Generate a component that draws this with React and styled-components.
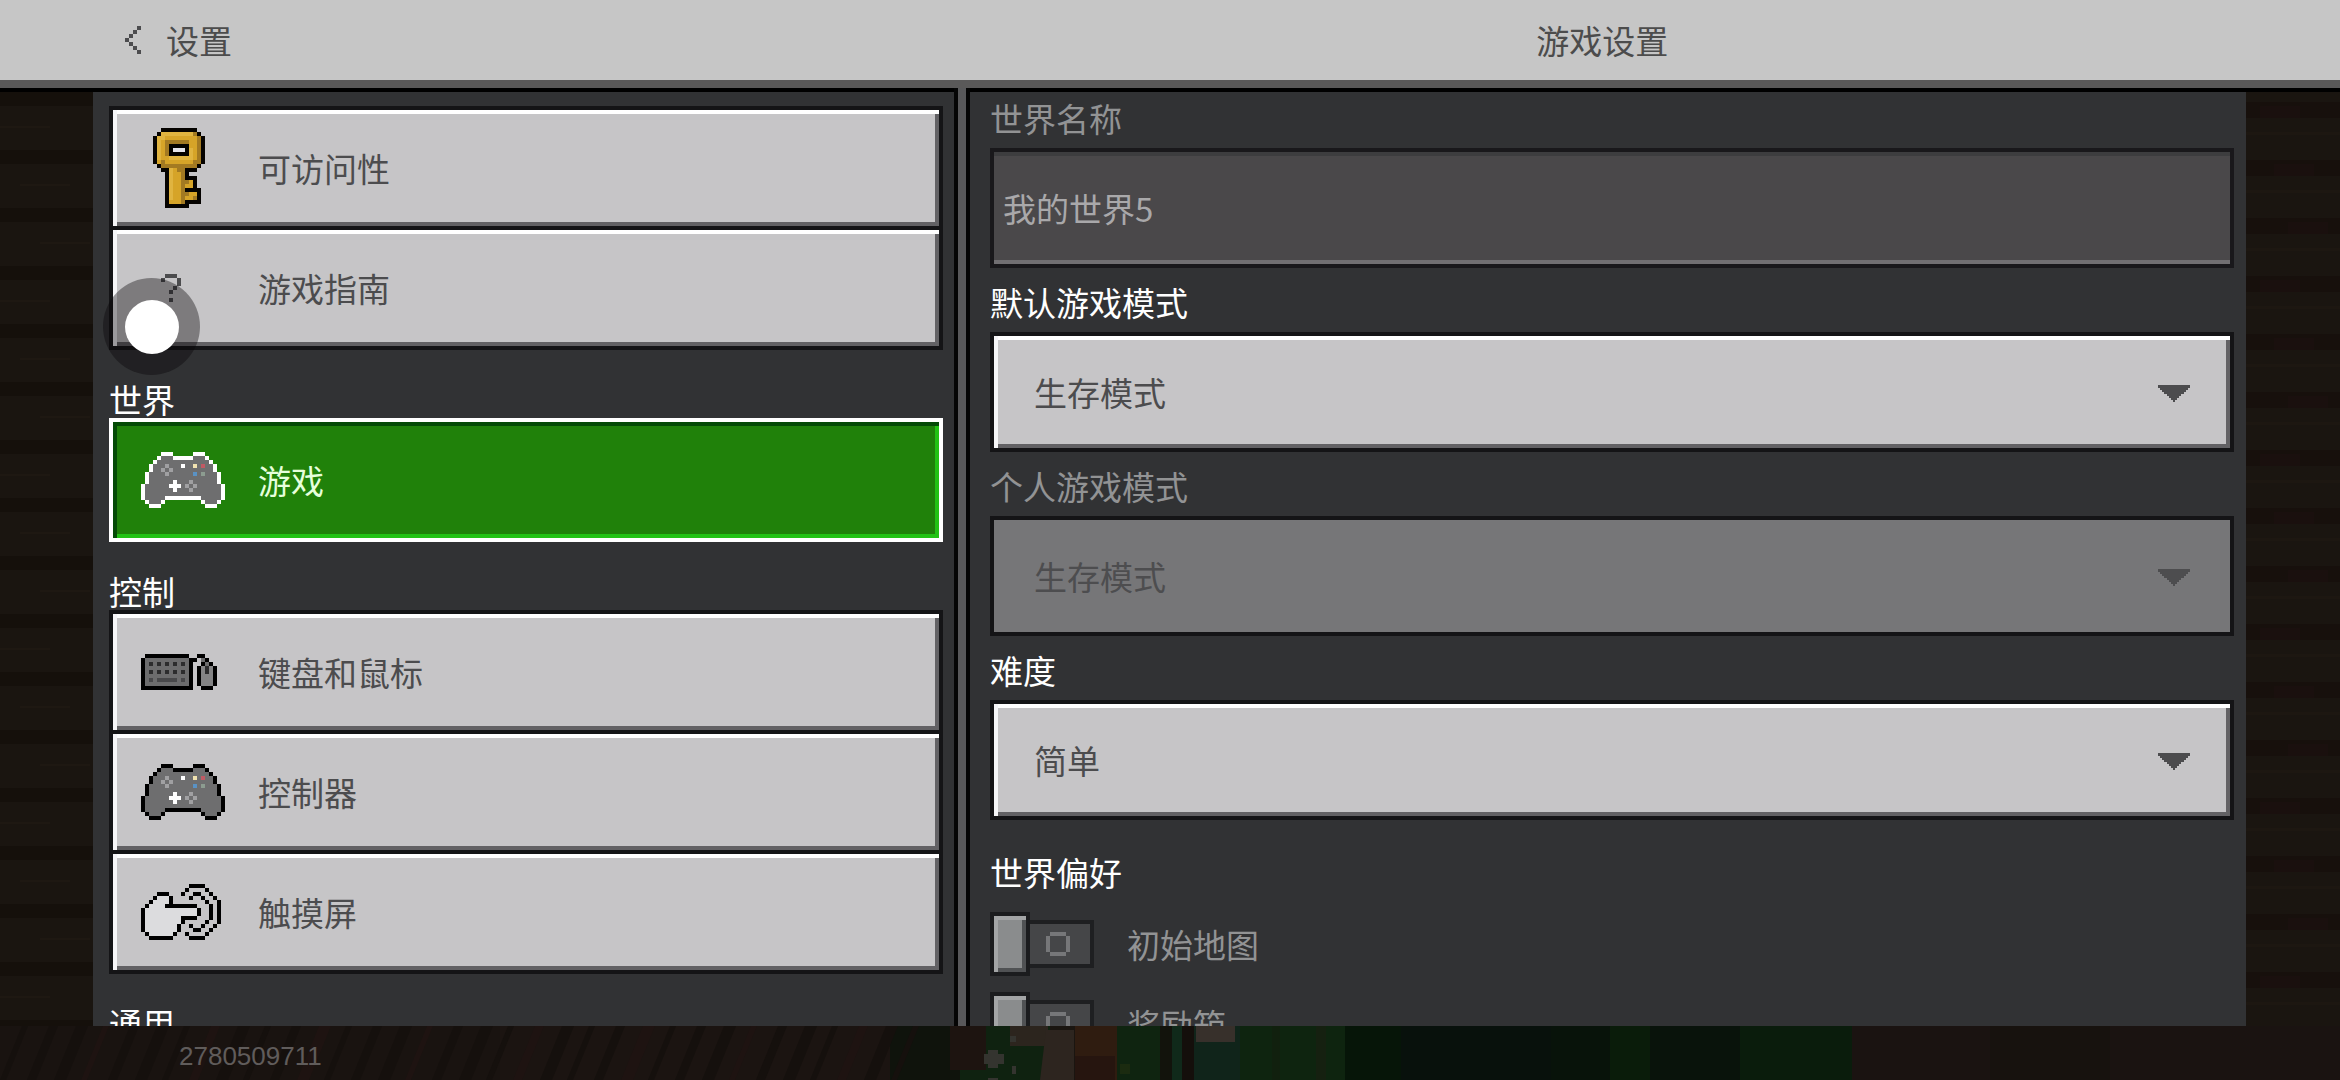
import React from "react";
import styled, { createGlobalStyle } from "styled-components";

const GlobalStyle = createGlobalStyle`
  * {
    box-sizing: border-box;
  }
  body {
    margin: 0;
    background-color: #1a1511;
  }
  body, button, input, select {
    font-family: "Noto Sans CJK SC", sans-serif;
    font-size: 33px;
    font-weight: 400;
    line-height: 40px;
  }
`;

const Page = styled.div`
  position: relative;
  isolation: isolate;
  display: flex;
  flex-direction: column;
  height: 100vh;
  overflow: hidden;
`;

const Scene = styled.svg`
  position: absolute;
  inset: 0;
  z-index: -1;
  width: 100%;
  height: 100%;
`;

const Header = styled.header`
  display: grid;
  grid-template-columns: 877fr 1276fr;
  align-items: center;
  flex: none;
  height: 88px;
  margin-bottom: 4px;
  padding: 0 94px;
  border-bottom: 8px solid #5a5959;
  background-color: #c6c6c6;
  color: #4c4c4c;
  box-shadow: 0 4px 0 #000;
`;

const Back = styled.button`
  display: flex;
  align-items: center;
  gap: 25px;
  justify-self: start;
  margin-left: 31px;
  padding: 0;
  border: none;
  background: none;
  color: inherit;
`;

const Title = styled.h1`
  margin: 0;
  padding-right: 12px;
  font-size: 33px;
  font-weight: 400;
  line-height: 40px;
  text-align: center;
`;

const Main = styled.main`
  display: grid;
  grid-template-columns: 861fr 16px 1276fr;
  grid-template-rows: 100%;
  flex: 1;
  min-height: 0;
  margin: 0 94px 0 93px;
`;

const Divider = styled.div`
  margin-top: -4px;
  border: solid #050505;
  border-width: 0 4px;
  background-color: #58585a;
`;

const Sidebar = styled.nav`
  overflow: hidden;
  padding: 14px 11px 0 16px;
  background-color: #313234;
`;

const Content = styled.section`
  overflow: hidden;
  padding: 0 12px 0 20px;
  background-color: #313234;
`;

const GroupTitle = styled.h2`
  display: flex;
  align-items: flex-end;
  height: 68px;
  margin: 0;
  font-size: 33px;
  font-weight: 400;
  line-height: 38px;
  color: #fff;
`;

const NavButton = styled.button`
  display: flex;
  align-items: center;
  gap: 33px;
  width: 100%;
  height: 124px;
  padding: 0 28px;
  border: 4px solid ${(props) => (props.$active ? "#fff" : "#141416")};
  background-color: ${(props) => (props.$active ? "#20810a" : "#c6c5c7")};
  color: ${(props) => (props.$active ? "#e6ffdc" : "#4c4c4e")};
  box-shadow: ${(props) =>
    props.$active
      ? "inset 4px 0 #044a06, inset 0 4px #044a06, inset -4px -4px #22c214"
      : "inset 4px 0 #f6f6f8, inset 0 4px #fff, inset -4px -4px #626164"};

  & + & {
    margin-top: -4px;
  }
`;

const Icon = styled.svg`
  display: block;
  flex: none;
  shape-rendering: crispEdges;
`;

const Field = styled.div`
  display: flex;
  flex-direction: column;
`;

const FieldLabel = styled.label`
  display: flex;
  align-items: flex-end;
  height: ${(props) => (props.$first ? "56px" : "64px")};
  padding-bottom: 10px;
  color: ${(props) => (props.$dim ? "#929394" : "#fff")};
`;

const TextInput = styled.input`
  width: 100%;
  height: 120px;
  padding: 0 9px;
  border: 4px solid #19181b;
  border-radius: 0;
  background-color: #4a484a;
  color: #a9a8aa;
  box-shadow: inset 0 4px #3d3d3f, inset 0 -4px #716f72;
`;

const SelectBox = styled.div`
  display: grid;
  align-items: center;
  color: ${(props) => (props.$dim ? "#4d4d4f" : "#4c4c4e")};

  > * {
    grid-area: 1 / 1;
  }
  > svg {
    justify-self: end;
    margin-right: 44px;
    pointer-events: none;
  }
`;

const Select = styled.select`
  appearance: none;
  width: 100%;
  height: 120px;
  padding: 0 40px;
  border: 4px solid #141416;
  border-radius: 0;
  background-color: #c6c5c7;
  color: inherit;
  opacity: 1;
  box-shadow: inset 4px 0 #f6f6f8, inset 0 4px #fff, inset -4px -4px #626164;

  &:disabled {
    background-color: #767678;
    box-shadow: none;
    opacity: 1;
  }
`;

const SectionTitle = styled.h2`
  margin: 0;
  padding: 32px 0 20px;
  font-size: 33px;
  font-weight: 400;
  line-height: 40px;
  color: #fff;
`;

const ToggleRow = styled.label`
  display: flex;
  align-items: center;
  gap: 33px;
  height: 64px;
  margin-bottom: 16px;
  color: #929394;
`;

const Toggle = styled.span`
  position: relative;
  display: flex;
  align-items: center;
`;

const ToggleInput = styled.input`
  position: absolute;
  inset: 0;
  width: 100%;
  height: 100%;
  margin: 0;
  opacity: 0;
`;

const Knob = styled.span`
  width: 40px;
  height: 64px;
  border: 4px solid #1b1c1e;
  background-color: #8a8c8d;
  box-shadow: inset 4px 0 #a3a5a6, inset 0 4px #a3a5a6, inset -4px -4px #505254;
`;

const Track = styled.span`
  display: flex;
  align-items: center;
  justify-content: center;
  width: 64px;
  height: 48px;
  padding-right: 4px;
  border: solid #1e1f21;
  border-width: 4px 4px 4px 0;
  background-color: #454648;
`;

const Footer = styled.footer`
  flex: none;
  height: 54px;
  padding: 2px 0 0 179px;
  font-family: "Liberation Sans", sans-serif;
  font-size: 26px;
  font-weight: 400;
  line-height: 56px;
  color: #605c5b;
`;

const TouchRing = styled.div`
  position: absolute;
  top: 278px;
  left: 103px;
  display: flex;
  align-items: center;
  justify-content: center;
  width: 97px;
  height: 97px;
  border-radius: 50%;
  background-color: rgba(9, 6, 9, 0.385);
  pointer-events: none;
`;

const TouchDot = styled.div`
  width: 54px;
  height: 54px;
  border-radius: 50%;
  background-color: #fff;
`;

// one character per texel, "." is empty
const KEY = [
  "..KKKKKKKKK..",
  ".KYYYYYYYYdK.",
  "KYYyyyyyyyydK",
  "KYyddddddyydK",
  "KYydKKKKKyydK",
  "KYydKwwwKYydK",
  "KYydKKKKKYydK",
  "KYyyYYYYYYydK",
  "KydyyyyyyyddK",
  ".KdddddddddK.",
  "..KKYyddKKK..",
  "...KYyydK....",
  "...KYyydKKK..",
  "...KYyyddyK..",
  "...KYyydyyK..",
  "...KYyydKKKK.",
  "...KYyyddyyK.",
  "...KYyydyydK.",
  "...KyyydKKKK.",
  "...KKKKKK....",
];

const QUESTION = [
  ".qqq.",
  "q...q",
  "....q",
  "...q.",
  "..q..",
  ".....",
  "..q..",
];

const GAMEPAD = [
  ".....KKK.....KKK.....",
  "....KgggKKKKKgggK....",
  "...KgggggggggggggK...",
  "..KgggLgggWggYgRggK..",
  "..KggLgLggggggggggK..",
  ".KggggLggggggBgGgggK.",
  ".KgggggggggggggggggK.",
  ".KggggggWgggLggggggK.",
  "KggggggWWWgLgLggggggK",
  "KgggggggWgggLgggggggK",
  "KgggggggggggggggggggK",
  "KgggggKKKKKKKKKgggggK",
  ".KgggK.........KgggK.",
  "..KKK...........KKK..",
];

const KEYBOARD = [
  ".KKKKKKKKKKK..KK...",
  "KgggggggggggKK.gK..",
  "KgDgDgDgDgDgK..KgK.",
  "KgggggggggggK.KmDmK",
  "KgDgDgDgDgDgK.KmDmK",
  "KgggggggggggK.KmmmK",
  "KgdgdddddgdgK.KmmmK",
  "KgggggggggggK.KmmmK",
  "KKKKKKKKKKKKK..KKK.",
];

const HAND = [
  "............KKKK....",
  "...........K....K...",
  "....KKK...K..KK..K..",
  "...KfffK....K..K..K.",
  "..KffffK........K..K",
  ".KffffKKKKKKKK...K.K",
  "KfffffffffffffK..K.K",
  "KfffffffffffffK..K.K",
  "KfffffffffKKKK...K.K",
  "KfffffffffK.....K..K",
  "KffffffffK..K..K..K.",
  "KffffffffK...KK..K..",
  ".KffffffK..K....K...",
  "..KKKKKK....KKKK....",
];

const CHEVRON = ["...q", "..q.", ".q..", "q...", ".q..", "..q.", "...q"];

const RING = [".oooo.", "o....o", "o....o", "o....o", "o....o", ".oooo."];

const KEY_COLORS = { K: "#050300", Y: "#e0b440", y: "#d6a428", d: "#a37a22", w: "#e4e4ea" };
const PAD_COLORS = {
  K: "#000",
  g: "#6e6e6f",
  L: "#a0a0a2",
  W: "#fff",
  Y: "#f0e2b0",
  R: "#c05a64",
  B: "#5a92c4",
  G: "#8c9c90",
};
const KEYBOARD_COLORS = { K: "#000", g: "#6c6c6d", D: "#2c2c2d", d: "#48484a", m: "#848485" };
const HAND_COLORS = { K: "#000", f: "#dcdcde" };
const INK = { q: "#4c4c4e", o: "#767779" };

function Pixels({ map, colors, columns, left = 0 }) {
  const cols = columns || map[0].length;
  return (
    <Icon
      width={cols * 4}
      height={map.length * 4}
      viewBox={`${-left} 0 ${cols} ${map.length}`}
      aria-hidden="true"
    >
      {map.map((row, y) =>
        [...row].map((c, x) =>
          c === "." ? null : (
            <rect key={`${x}-${y}`} x={x} y={y} width="1" height="1" fill={colors[c]} />
          )
        )
      )}
    </Icon>
  );
}

function Arrow() {
  return (
    <Icon width="32" height="20" viewBox="0 -3 32 20" aria-hidden="true">
      <path
        fill="currentColor"
        d="M0 0h32v3h-2v2h-2v2h-2v2h-3v2h-2v2h-2v2h-2v2h-2v-2h-2v-2h-2v-2h-2v-2h-3v-2h-2v-2h-2v-2h-2z"
      />
    </Icon>
  );
}

function Dropdown({ id, label, value, disabled }) {
  return (
    <Field>
      <FieldLabel htmlFor={id} $dim={disabled}>
        {label}
      </FieldLabel>
      <SelectBox $dim={disabled}>
        <Select id={id} defaultValue={value} disabled={disabled}>
          <option>{value}</option>
        </Select>
        <Arrow />
      </SelectBox>
    </Field>
  );
}

function Switch({ label }) {
  return (
    <ToggleRow>
      <Toggle>
        <ToggleInput type="checkbox" disabled />
        <Knob />
        <Track>
          <Pixels map={RING} colors={INK} />
        </Track>
      </Toggle>
      {label}
    </ToggleRow>
  );
}

const groups = [
  {
    items: [
      { text: "可访问性", icon: KEY, colors: KEY_COLORS, left: 3 },
      { text: "游戏指南", icon: QUESTION, colors: INK, left: 5 },
    ],
  },
  {
    title: "世界",
    items: [
      { text: "游戏", icon: GAMEPAD, colors: { ...PAD_COLORS, K: "#fff" }, active: true },
    ],
  },
  {
    title: "控制",
    items: [
      { text: "键盘和鼠标", icon: KEYBOARD, colors: KEYBOARD_COLORS },
      { text: "控制器", icon: GAMEPAD, colors: PAD_COLORS },
      { text: "触摸屏", icon: HAND, colors: HAND_COLORS },
    ],
  },
  { title: "通用", items: [] },
];

// x, y, width, height, color
const blocks = [
  [0, 1026, 900, 54, "#191310"],
  [500, 1026, 400, 54, "#1b1411"],
  [890, 1026, 70, 54, "#0f130c"],
  [960, 1026, 90, 54, "#0f2210"],
  [950, 1026, 36, 44, "#1d1410"],
  [1010, 1026, 38, 20, "#2c251e"],
  [1075, 1026, 42, 54, "#2f1c10"],
  [1075, 1056, 40, 24, "#26150f"],
  [1117, 1026, 44, 54, "#0f2410"],
  [1120, 1064, 10, 10, "#1b2b10"],
  [1160, 1026, 12, 54, "#12130c"],
  [1172, 1026, 10, 54, "#10291a"],
  [1182, 1026, 12, 54, "#140f0b"],
  [1194, 1026, 46, 54, "#10241a"],
  [1240, 1026, 105, 54, "#0e240f"],
  [1272, 1026, 8, 54, "#11200e"],
  [1316, 1026, 10, 54, "#152010"],
  [1196, 1026, 39, 16, "#37302b"],
  [1345, 1026, 56, 54, "#061508"],
  [1401, 1026, 150, 54, "#08110c"],
  [1551, 1026, 59, 54, "#08130a"],
  [1610, 1026, 40, 54, "#0a1c0a"],
  [1650, 1026, 90, 54, "#09130b"],
  [1740, 1026, 112, 54, "#0a1c0c"],
  [1852, 1026, 488, 54, "#1a1311"],
  [1990, 1026, 120, 54, "#17120e"],
];

function Background() {
  const slants = Array.from({ length: 34 }, (_, i) => i * 27);
  const planks = Array.from({ length: 17 }, (_, i) => 92 + i * 58);
  return (
    <Scene viewBox="0 0 2340 1080" preserveAspectRatio="none" aria-hidden="true">
      <rect width="2340" height="1080" fill="#1a1510" />
      {planks.map((y, i) => (
        <g key={y}>
          <rect x="0" y={y} width="93" height="14" fill="#15100b" />
          <rect x={(i % 3) * 20} y={y + 34} width="50" height="2" fill="#1e1812" />
          <rect x="2246" y={y + 10} width="94" height="16" fill="#17100c" />
          <rect x={2260 + (i % 3) * 14} y={y + 14} width="40" height="12" fill="#1a100e" />
          <rect x="2246" y={y + 40} width="94" height="3" fill="#1d1711" />
        </g>
      ))}
      {blocks.map(([x, y, w, h, fill]) => (
        <rect key={`${x}-${y}`} x={x} y={y} width={w} height={h} fill={fill} />
      ))}
      {slants.map((x, i) => (
        <path
          key={x}
          d={`M${x} 1080l22 -54h${6 + (i % 3) * 3}l-22 54z`}
          fill={i % 4 === 3 ? "#1e1311" : "#15100d"}
        />
      ))}
      <path d="M1046 1030h28v50h-34z" fill="#2d251f" />
      <path d="M988 1078h10v2h-10zM988 1050h10v4h6v10h-6v4h-10v-4h-4v-10h4z" fill="#34342f" />
      <path d="M1010 1036h6v6h-6zM1012 1066h4v8h-4z" fill="#34342f" />
    </Scene>
  );
}

function App() {
  return (
    <>
      <GlobalStyle />
      <Page>
        <Background />
        <Header>
          <Back type="button">
            <Pixels map={CHEVRON} colors={INK} />
            设置
          </Back>
          <Title>游戏设置</Title>
        </Header>
        <Main>
          <Sidebar>
            {groups.map((group, i) => (
              <div key={i}>
                {group.title && <GroupTitle>{group.title}</GroupTitle>}
                {group.items.map((item) => (
                  <NavButton key={item.text} type="button" $active={item.active}>
                    <Pixels map={item.icon} colors={item.colors} columns={21} left={item.left} />
                    {item.text}
                  </NavButton>
                ))}
              </div>
            ))}
          </Sidebar>
          <Divider />
          <Content>
            <Field>
              <FieldLabel htmlFor="world-name" $first $dim>
                世界名称
              </FieldLabel>
              <TextInput id="world-name" defaultValue="我的世界5" disabled />
            </Field>
            <Dropdown id="default-mode" label="默认游戏模式" value="生存模式" />
            <Dropdown id="personal-mode" label="个人游戏模式" value="生存模式" disabled />
            <Dropdown id="difficulty" label="难度" value="简单" />
            <SectionTitle>世界偏好</SectionTitle>
            <Switch label="初始地图" />
            <Switch label="奖励箱" />
          </Content>
        </Main>
        <Footer>2780509711</Footer>
        <TouchRing>
          <TouchDot />
        </TouchRing>
      </Page>
    </>
  );
}

export default App;
